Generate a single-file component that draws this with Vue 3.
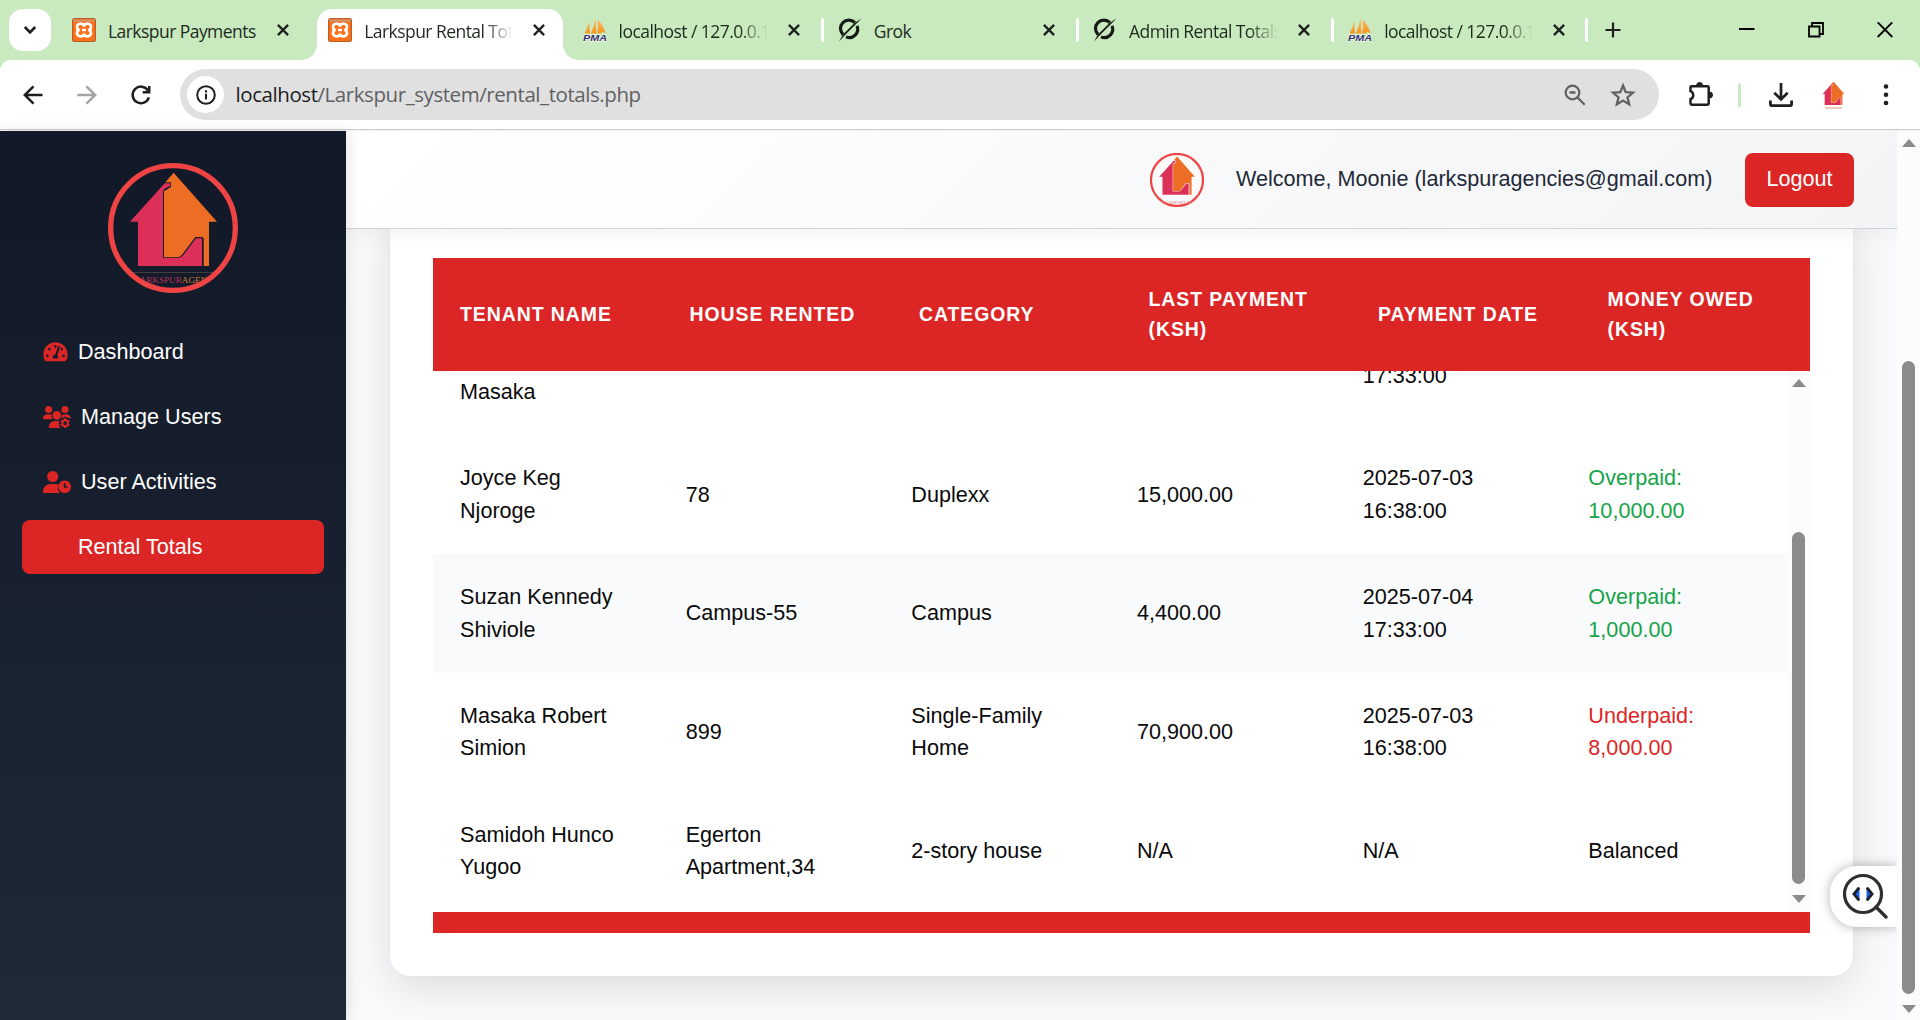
<script setup>
const tabs = [
  { icon: 'xampp', title: 'Larkspur Payments' },
  { icon: 'xampp', title: 'Larkspur Rental Totals', active: true, fade: true },
  { icon: 'pma', title: 'localhost / 127.0.0.1', fade: true },
  { icon: 'grok', title: 'Grok', sep: true },
  { icon: 'grok', title: 'Admin Rental Totals', fade: true, sep: true },
  { icon: 'pma', title: 'localhost / 127.0.0.1', fade: true, sep: true },
]
const columns = ['Tenant Name', 'House Rented', 'Category', 'Last Payment (KSH)', 'Payment Date', 'Money Owed (KSH)']
const rows = [
  { cells: ['Joyce Keg Njoroge', '78', 'Duplexx', '15,000.00', '2025-07-03 16:38:00', 'Overpaid: 10,000.00'], tone: 'over' },
  { cells: ['Suzan Kennedy Shiviole', 'Campus-55', 'Campus', '4,400.00', '2025-07-04 17:33:00', 'Overpaid: 1,000.00'], tone: 'over', striped: true },
  { cells: ['Masaka Robert Simion', '899', 'Single-Family Home', '70,900.00', '2025-07-03 16:38:00', 'Underpaid: 8,000.00'], tone: 'under' },
  { cells: ['Samidoh Hunco Yugoo', 'Egerton Apartment,34', '2-story house', 'N/A', 'N/A', 'Balanced'], tone: '' },
]
</script>

<template>
  <div class="window">
    <svg width="0" height="0" class="defs">
      <defs>
        <linearGradient id="sail" x1="0" y1="0" x2="0" y2="1">
          <stop offset="0" stop-color="#fbc06a" /><stop offset="1" stop-color="#f7931e" />
        </linearGradient>
        <clipPath id="round"><circle cx="519" cy="294" r="182" /></clipPath>
        <symbol id="house" viewBox="385 120 270 300">
          <path d="M521 128 651 275H627V408H611V325L607 321H586L546 374Q538 382 530 382H492V184L513 171V157H496Z" fill="#ee6d25" />
          <path d="M390 275 494 160H511V168L497 174Q489 178 489 188V384H534Q542 383 550 375L588 325H606V408H414V275Z" fill="#dc3058" />
        </symbol>
      </defs>
    </svg>

    <div class="tabstrip">
      <div class="tab-search">
        <svg width="14" height="10" viewBox="0 0 14 10"><path d="M1.8 2 7 7.4 12.2 2" fill="none" stroke="#1f1f1f" stroke-width="2.6" /></svg>
      </div>
      <div class="tabs">
        <div v-for="(t, i) in tabs" :key="i" class="tab" :class="{ active: t.active, sep: t.sep }">
          <svg v-if="t.icon === 'xampp'" class="fav" viewBox="0 0 24 24">
            <rect width="24" height="24" rx="2.5" fill="#b85c22" /><rect x="1" y="1.6" width="22" height="21.4" rx="2" fill="#f9721b" />
            <rect x="1" y="1" width="22" height="3" rx="1" fill="#dc8a58" />
            <path d="M12 7.600C10.500 4.800 5 5 5 9 5 10.600 5.800 11.500 6.800 12 5.800 12.600 5 13.600 5 15.100 5 19 10.500 19.200 12 16.500 13.500 19.200 19 19 19 15.100 19 13.600 18.200 12.600 17.200 12 18.200 11.500 19 10.600 19 9 19 5 13.500 4.800 12 7.600ZM10 12H14" fill="none" stroke="#fff" stroke-width="2.700" stroke-linejoin="round" />
          </svg>
          <svg v-else-if="t.icon === 'pma'" class="fav" viewBox="0 0 24 24">
            <path d="M6 3.500 7 15.500H1.500Q4.500 10 6 3.500ZM12.500 0 13.500 15.500H7.800Q11.500 8 12.500 0ZM14.500 1.500Q21 8 22.500 15.500L19 13.500 18.500 15.500H14.300Q15.500 9 14.500 1.500Z" fill="url(#sail)" />
            <text x="0" y="23.300" textLength="24" lengthAdjust="spacingAndGlyphs" class="pma">PMA</text>
          </svg>
          <svg v-else class="fav" viewBox="0 0 24 24">
            <path d="M16.800 4.500A8.400 8.400 0 0 0 5 16.500M19 7.900A8.400 8.400 0 0 1 8 18.900" fill="none" stroke="#161a16" stroke-width="3.200" />
            <path d="M23.500 .5 8.500 15.500 1 23.500 5 16.500 16.500 5Z" fill="#161a16" />
          </svg>
          <span class="title" :class="{ fade: t.fade }">{{ t.title }}</span>
          <svg class="close" viewBox="0 0 12 12"><path d="M.9 .9 11.100 11.100M11.100 .9 .9 11.100" stroke="#1f1f1f" stroke-width="2.300" /></svg>
        </div>
      </div>
      <div class="newtab">
        <svg width="16" height="16" viewBox="0 0 16 16"><path d="M8 .5V15.500M.5 8H15.500" stroke="#1f1f1f" stroke-width="2.200" /></svg>
      </div>
      <div class="controls">
        <svg width="16" height="16" viewBox="0 0 16 16"><path d="M0 7H15.500" stroke="#000" stroke-width="2" /></svg>
        <svg width="16" height="16" viewBox="0 0 16 16"><path d="M1 4.500H11.500V14.500H1ZM4 4V1H15V12H12" fill="none" stroke="#000" stroke-width="1.800" /></svg>
        <svg width="16" height="16" viewBox="0 0 16 16"><path d="M.7 .3 15.300 15M15.300 .3 .7 15" stroke="#000" stroke-width="1.800" /></svg>
      </div>
    </div>

    <div class="toolbar">
      <svg class="nav-ic" viewBox="0 0 24 24"><path d="M21.500 12H4M12.500 3.300 3.800 12 12.500 20.700" fill="none" stroke="#1f1f1f" stroke-width="2.500" /></svg>
      <svg class="nav-ic" viewBox="0 0 24 24"><path d="M2.500 12H20M11.500 3.300 20.200 12 11.500 20.700" fill="none" stroke="#a3a3a3" stroke-width="2.500" /></svg>
      <svg class="nav-ic" viewBox="0 0 24 24"><path d="M19 7.500A8.300 8.300 0 1 0 19.900 14.300M20.200 3V9.200H13.700" fill="none" stroke="#1f1f1f" stroke-width="2.500" /></svg>
      <div class="url">
        <span class="info">
          <svg width="20" height="20" viewBox="0 0 20 20"><circle cx="10" cy="10" r="8.800" fill="none" stroke="#1f1f1f" stroke-width="2" /><path d="M10 8.800V14.500M10 5.300V7.400" stroke="#1f1f1f" stroke-width="2.100" /></svg>
        </span>
        <span class="addr"><b>localhost</b>/Larkspur_system/rental_totals.php</span>
        <svg class="zoom" viewBox="0 0 22 22"><circle cx="8.500" cy="8.500" r="6.800" fill="none" stroke="#5f6163" stroke-width="2.200" /><path d="M13.500 13.500 20.700 20.700M5.500 8.500H11.500" stroke="#5f6163" stroke-width="2.300" /></svg>
        <svg class="star" viewBox="0 0 24 24"><path d="M12 3.200 14.500 9.400 21.200 9.900 16.100 14.200 17.700 20.700 12 17.200 6.300 20.700 7.900 14.200 2.800 9.900 9.500 9.400Z" fill="none" stroke="#5f6163" stroke-width="2.100" /></svg>
      </div>
      <svg class="puzzle" viewBox="0 0 26 26"><path d="M4 5.200H19.500Q20.700 5.200 20.700 6.400V22.500Q20.700 23.700 19.500 23.700H3.700Q2.500 23.700 2.500 22.500V18.200A4.300 4.300 0 0 0 2.500 10.200V6.400Q2.500 5.200 4 5.200Z" fill="none" stroke="#1f1f1f" stroke-width="2.500" /><path d="M8.600 4.500A3 3 0 0 1 14.600 4.500ZM21.500 11V17A3 3 0 0 0 21.500 11Z" fill="#1f1f1f" stroke="#1f1f1f" /></svg>
      <span class="divider"></span>
      <svg class="download" viewBox="0 0 24 24"><path d="M12 0V16M5.300 9.700 12 16.400 18.700 9.700" fill="none" stroke="#1f1f1f" stroke-width="2.700" /><path d="M1.400 17.500V21.300Q1.400 22.700 2.800 22.700H21.200Q22.600 22.700 22.600 21.300V17.500" fill="none" stroke="#1f1f1f" stroke-width="2.800" /></svg>
      <div class="profile">
        <svg width="23" height="25"><use href="#house" width="23" height="25" /></svg>
        <i></i>
      </div>
      <svg class="dots" viewBox="0 0 6 22"><circle cx="3" cy="2.500" r="2.300" /><circle cx="3" cy="10.800" r="2.300" /><circle cx="3" cy="19" r="2.300" /></svg>
    </div>

    <div class="page">
      <aside class="sidebar">
        <svg class="logo" viewBox="324 99 390 390">
          <g clip-path="url(#round)">
            <use href="#house" x="385" y="120" width="270" height="300" />
            <path d="M390 427.500H650" stroke="#5b5048" stroke-width="2" />
            <text x="402" y="459" textLength="238" lengthAdjust="spacingAndGlyphs" class="brand"><tspan fill="#b8325e">LARKSPUR</tspan><tspan fill="#cf7838">AGENC</tspan></text>
          </g>
          <circle cx="519" cy="294" r="187" fill="none" stroke="#ef4444" stroke-width="16" />
        </svg>
        <nav>
          <a class="item">
            <svg width="25" height="21.600" viewBox="0 0 576 512"><path fill="#dc2626" d="M288 32C128.940 32 0 160.940 0 320c0 52.800 14.250 102.260 39.060 144.800 5.610 9.620 16.300 15.200 27.440 15.200h443c11.140 0 21.830-5.580 27.440-15.200C561.750 422.260 576 372.800 576 320c0-159.060-128.940-288-288-288zm0 64c14.710 0 26.580 10.130 30.320 23.650-1.110 2.260-2.640 4.230-3.450 6.670l-9.220 27.670c-5.130 3.490-10.970 6.010-17.640 6.010-17.670 0-32-14.330-32-32S270.330 96 288 96zM96 384c-17.670 0-32-14.330-32-32s14.330-32 32-32 32 14.330 32 32-14.330 32-32 32zm48-160c-17.670 0-32-14.330-32-32s14.330-32 32-32 32 14.330 32 32-14.330 32-32 32zm246.770-72.410l-61.330 184C343.130 347.330 352 364.540 352 384c0 11.720-3.380 22.550-8.880 32H232.880c-5.500-9.450-8.880-20.280-8.880-32 0-33.940 26.500-61.430 59.900-63.590l61.340-184.010c4.170-12.560 17.730-19.450 30.360-15.170 12.570 4.190 19.350 17.790 15.170 30.360zm14.660 57.200l15.520-46.550c3.470-1.290 7.130-2.230 11.050-2.230 17.670 0 32 14.330 32 32s-14.330 32-32 32c-11.380-.01-20.890-6.280-26.570-15.220zM480 384c-17.670 0-32-14.330-32-32s14.330-32 32-32 32 14.330 32 32-14.330 32-32 32z" /></svg>
            Dashboard
          </a>
          <a class="item">
            <svg width="28" height="22" viewBox="0 0 84 66" fill="#dc2626">
              <circle cx="17" cy="10.500" r="10.500" /><circle cx="66" cy="10.500" r="10.500" /><circle cx="41.500" cy="28" r="13" />
              <path d="M2.500 40Q0 40 0 37 1 26 13 25H20Q23 25 26 26.500 24 34 29 40ZM57 26.500Q60 25 63 25H69Q81 26 83 36 83 38 81 37.500L76 35 73 35 70 32H63L60 36 54 38Q58 32 57 26.500Z" />
              <path d="M20 66Q17 66 17 63 19 46 35 45H47L49 47 47 52 50 56 48 61 53 66Z" />
              <circle cx="66.500" cy="51.500" r="8.500" fill="none" stroke="#dc2626" stroke-width="6" />
              <path d="M66.500 37V42M66.500 61V66M54 44.500 58 47M79 44.500 75 47M54 58.500 58 56M79 58.500 75 56" stroke="#dc2626" stroke-width="6.500" />
            </svg>
            Manage Users
          </a>
          <a class="item">
            <svg width="28" height="22" viewBox="0 0 84 66" fill="#dc2626">
              <circle cx="29" cy="16.500" r="16.500" />
              <path d="M3 66Q0 66 0 62 1 41 22 39H36Q43 39 48 42 39 55 51 66Z" />
              <path fill-rule="evenodd" d="M65 28.500A18.800 18.800 0 1 0 65.010 28.500ZM62.500 37H67.500V46H73V50.500H62.500Z" />
            </svg>
            User Activities
          </a>
          <a class="item active"><span class="gap"></span>Rental Totals</a>
        </nav>
      </aside>

      <div class="main">
        <header class="topbar">
          <svg class="avatar" viewBox="0 0 54 54">
            <circle cx="27" cy="27" r="26" fill="#fafafb" stroke="#ef4444" stroke-width="2.200" />
            <use href="#house" x="8.200" y="2.500" width="37.500" height="41" />
            <text x="12" y="50.500" textLength="30" lengthAdjust="spacingAndGlyphs" class="tiny">LARKSPUR</text>
          </svg>
          <span class="welcome">Welcome, Moonie (larkspuragencies@gmail.com)</span>
          <button class="logout">Logout</button>
        </header>
        <section class="card">
          <div class="thead"><div v-for="c in columns" :key="c" class="th">{{ c }}</div></div>
          <div class="scroller">
            <div class="tbody">
              <div class="tr first">
                <div class="td low">Masaka</div><div class="td"></div><div class="td"></div><div class="td"></div>
                <div class="td mid">17:33:00</div><div class="td"></div>
              </div>
              <div v-for="r in rows" :key="r.cells[0]" class="tr" :class="{ striped: r.striped }">
                <div v-for="(c, i) in r.cells" :key="i" class="td" :class="i === 5 ? r.tone : ''">{{ c }}</div>
              </div>
            </div>
            <div class="sbar inner"><i class="up"></i><i class="thumb"></i><i class="down"></i></div>
          </div>
          <div class="tfoot"></div>
        </section>
        <div class="inspect">
          <svg width="48" height="48" viewBox="0 0 48 48">
            <circle cx="21" cy="21" r="18.500" fill="none" stroke="#2f2f2f" stroke-width="3.200" />
            <path d="M34 34 44 44" stroke="#2f2f2f" stroke-width="3.400" stroke-linecap="round" />
            <path d="M17.500 16V26L13.500 21ZM24.500 16V26L28.500 21Z" fill="#1463ff" />
            <path d="M16.500 15.500 12 21 16.500 26.500M25.500 15.500 30 21 25.500 26.500" fill="none" stroke="#1c222b" stroke-width="2.900" stroke-linecap="round" />
          </svg>
        </div>
      </div>
      <div class="sbar outer"><i class="up"></i><i class="thumb"></i><i class="down"></i></div>
    </div>
  </div>
</template>

<style>
body { overflow: hidden; }
</style>

<style scoped>
* { box-sizing: border-box; }
.window { width: 1920px; height: 1020px; display: flex; flex-direction: column; background: #c9e9be; overflow: hidden; font-family: "Liberation Sans", Arial, sans-serif; }
.defs { position: absolute; }
svg { flex: none; display: block; }

.tabstrip { height: 60px; flex: none; display: flex; padding-left: 9px; }
.tab-search { width: 42px; height: 42px; margin: 9px 10px 0 0; border-radius: 14px; background: #fff; display: flex; align-items: center; justify-content: center; }
.tabs { display: flex; }
.tab { position: relative; width: 255.200px; height: 51px; margin-top: 9px; padding: 0 0 9px 11px; display: flex; align-items: center; }
.fav { width: 24px; height: 24px; overflow: visible; }
.pma { font: italic bold 9.500px "Liberation Sans", Arial, sans-serif; fill: #35306e; stroke: #fff; stroke-width: .8px; paint-order: stroke; }
.title { width: 150px; margin-left: 12px; padding-top: 2px; font: 17.500px/26px "Open Sans", "Noto Sans", sans-serif; letter-spacing: -.55px; color: #1f2a1f; white-space: nowrap; overflow: hidden; }
.title.fade { -webkit-mask-image: linear-gradient(90deg, #000 120px, transparent 149px); mask-image: linear-gradient(90deg, #000 120px, transparent 149px); }
.close { width: 12px; height: 12px; margin-left: 19px; }
.active.tab { width: 246px; margin-left: 1px; padding-left: 11px; margin-right: 8.400px; background: #fff; border-radius: 15px 15px 0 0; }
.active.tab::before, .active.tab::after { content: ""; position: absolute; bottom: 0; width: 15px; height: 15px; }
.active.tab::before { left: -15px; background: radial-gradient(circle at 0 0, transparent 14.500px, #fff 15px); }
.active.tab::after { right: -15px; background: radial-gradient(circle at 100% 0, transparent 14.500px, #fff 15px); }
.sep::before { content: ""; position: absolute; left: -6px; top: 9px; width: 3px; height: 24px; border-radius: 1.500px; background: #fff; }
.tabs::after { content: ""; width: 3px; height: 24px; margin: 18px 0 0 -7px; border-radius: 1.500px; background: #fff; }
.newtab { margin: 22px 0 0 17px; }
.controls { display: flex; gap: 53px; margin: 22px 27px 0 auto; }

.toolbar { height: 70px; flex: none; background: #fff; border-radius: 11px 11px 0 0; border-bottom: 1px solid #ccc; display: flex; align-items: center; padding-left: 21px; }
.nav-ic { width: 24px; height: 24px; margin-right: 30px; }
.url { width: 1479px; height: 51px; margin-left: -3px; border-radius: 26px; background: #e0e0e0; display: flex; align-items: center; padding-left: 7px; }
.info { width: 37px; height: 37px; border-radius: 50%; background: #fff; display: flex; align-items: center; justify-content: center; }
.addr { margin: -2px 0 0 11.500px; font: 20.500px/30px "Open Sans", "Noto Sans", sans-serif; color: #5f6163; white-space: nowrap; letter-spacing: -.43px; }
.addr b { font-weight: 400; color: #1b1d22; }
.zoom { width: 22px; height: 22px; margin-left: auto; }
.star { width: 26px; height: 26px; margin: 0 23px 0 24px; }
.puzzle { width: 26px; height: 26px; margin: -2px 0 0 28.500px; }
.divider { width: 3px; height: 24px; margin: 0 28px 0 24px; border-radius: 1.500px; background: #c9e9be; }
.download { width: 24px; height: 24px; }
.profile { width: 23px; margin-left: 29.500px; display: flex; flex-direction: column; align-items: center; gap: 1px; }
.profile i { width: 17px; height: 2px; background: #ecc8bd; }
.dots { width: 6px; height: 22px; margin: 0 0 0 38px; fill: #1f1f1f; }

.page { flex: 1; min-height: 0; display: flex; border-top: 1px solid #f4f4f4; }
.sidebar { position: relative; z-index: 2; width: 346px; flex: none; padding: 32px 22px 0; background: linear-gradient(180deg, #111827, #1f2937); box-shadow: 2px 0 14px rgba(0, 0, 0, .1); }
.logo { width: 130px; height: 130px; margin: 0 auto; }
.brand { font: 23px "Liberation Serif", serif; }
nav { margin-top: 32px; display: flex; flex-direction: column; gap: 11px; }
.item { height: 54px; padding: 0 21px; border-radius: 8px; display: flex; align-items: center; gap: 10px; font-size: 21.600px; color: #fff; }
.item.active { background: #dc2626; }
.gap { width: 25px; }

.main { position: relative; flex: 1; min-width: 0; display: flex; flex-direction: column; background: #f9fafb; overflow: hidden; }
.topbar { position: relative; z-index: 1; height: 98px; flex: none; display: flex; align-items: center; justify-content: flex-end; padding: 0 43px 0 0; border-bottom: 1px solid #d1d5db; background: linear-gradient(135deg, #fff, #f3f4f6); box-shadow: 0 5px 20px rgba(0, 0, 0, .05); }
.avatar { width: 54px; height: 54px; }
.tiny { font: 5px "Liberation Serif", serif; fill: #d98a8a; }
.welcome { width: 477px; margin: 0 32px; padding-bottom: 2px; font-size: 21.600px; color: #1f2937; white-space: nowrap; }
.logout { width: 109px; height: 54px; padding: 0 0 2px; border: 0; border-radius: 8px; background: #dc2626; color: #fff; font: 21.600px "Liberation Sans", Arial, sans-serif; }
.card { width: 1463px; height: 768px; flex: none; margin: -21px 0 0 44px; padding: 50px 43px 43px; background: #fff; border-radius: 20px; box-shadow: 0 11px 43px rgba(0, 0, 0, .12), 0 0 1px rgba(0, 0, 0, .15); }
.thead { height: 113px; display: flex; background: #dc2626; }
.th { flex: 1; padding: 0 27px; display: flex; align-items: center; font-size: 19.440px; line-height: 29.160px; font-weight: 700; letter-spacing: .94px; text-transform: uppercase; color: #fff; }
.scroller { height: 541px; display: flex; overflow: hidden; }
.tbody { flex: 1; height: 541px; display: flex; flex-direction: column; justify-content: flex-end; padding-bottom: 1.500px; overflow: hidden; }
.tr { height: 118.800px; flex: none; display: flex; }
.tr.first { height: 64px; }
.striped { background: #f9fafb; }
.td { flex: 1 1 0; min-width: 0; padding: 0 27px; display: flex; align-items: center; font-size: 21.600px; line-height: 32.400px; color: #0a0a0a; }
.td.low { align-items: flex-end; padding-bottom: 26.500px; }
.td.mid { align-items: flex-end; padding-bottom: 42.500px; }
.td.over { color: #16a34a; }
.td.under { color: #dc2626; }
.tfoot { height: 21px; background: #dc2626; }

.sbar { flex: none; width: 23px; background: #fcfcfc; display: flex; flex-direction: column; align-items: center; }
.up, .down { width: 0; height: 0; border: 7.500px solid transparent; }
.up { border-top: 0; border-bottom: 8px solid #8b8b8b; }
.down { border-bottom: 0; border-top: 8px solid #8b8b8b; }
.thumb { width: 13px; border-radius: 7px; background: #8b8b8b; }
.inner { padding-top: 8px; }
.inner .thumb { height: 352px; margin: 145px 0 11px; }
.outer { padding-top: 8px; }
.outer .thumb { height: 633px; margin: 214px 0 11px; }

.inspect { position: absolute; right: 0; top: 735px; width: 67px; height: 61px; padding: 7px 0 0 11.500px; border-radius: 27px 0 0 27px; background: #fff; box-shadow: 0 0 12px rgba(0, 0, 0, .3); }
</style>
